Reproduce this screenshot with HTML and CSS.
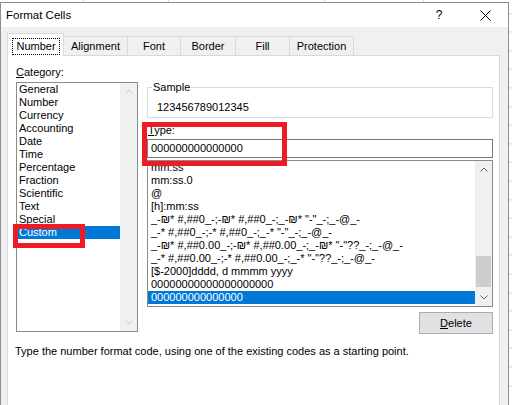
FILE: index.html
```html
<!DOCTYPE html>
<html lang="en">
<head>
<meta charset="utf-8">
<title>Format Cells</title>
<link rel="stylesheet" href="styles.css">
</head>
<body>
<div class="screen">
  <div class="dialog">
    <div class="titlebar">
      <span class="title">Format Cells</span>
      <span class="capbtn help">?</span>
      <span class="capbtn close">
        <svg width="11" height="11" viewBox="0 0 11 11"><path d="M0.5 0.5L10.5 10.5M10.5 0.5L0.5 10.5" stroke="#000" stroke-width="1" fill="none"/></svg>
      </span>
    </div>
    <div class="content">
      <div class="tabs">
        <div class="tab active t-number"><span class="focus">Number</span></div>
        <div class="tab t-align">Alignment</div>
        <div class="tab t-font">Font</div>
        <div class="tab t-border">Border</div>
        <div class="tab t-fill">Fill</div>
        <div class="tab t-prot">Protection</div>
      </div>
      <div class="panel">
        <div class="cols">
          <div class="left">
            <div class="label"><u>C</u>ategory:</div>
            <div class="listbox cat">
              <div class="items">
                <div class="item">General</div>
                <div class="item">Number</div>
                <div class="item">Currency</div>
                <div class="item">Accounting</div>
                <div class="item">Date</div>
                <div class="item">Time</div>
                <div class="item">Percentage</div>
                <div class="item">Fraction</div>
                <div class="item">Scientific</div>
                <div class="item">Text</div>
                <div class="item">Special</div>
                <div class="item sel">Custom</div>
              </div>
              <div class="vscroll disabled">
                <div class="arrow"><svg width="8" height="5" viewBox="0 0 8 5"><polyline points="0.5,4.5 4,1 7.5,4.5" fill="none" stroke-width="1"/></svg></div>
                <div class="track"></div>
                <div class="arrow"><svg width="8" height="5" viewBox="0 0 8 5"><polyline points="0.5,0.5 4,4 7.5,0.5" fill="none" stroke-width="1"/></svg></div>
              </div>
            </div>
          </div>
          <div class="right">
            <fieldset class="sample">
              <legend>Sample</legend>
              <div class="sample-val">123456789012345</div>
            </fieldset>
            <div class="label type-label"><u>T</u>ype:</div>
            <div class="input">000000000000000</div>
            <div class="listbox fmt">
              <div class="items">
                <div class="item">mm:ss</div>
                <div class="item">mm:ss.0</div>
                <div class="item">@</div>
                <div class="item">[h]:mm:ss</div>
                <div class="item">_-₪* #,##0_-;-₪* #,##0_-;_-₪* "-"_-;_-@_-</div>
                <div class="item">_-* #,##0_-;-* #,##0_-;_-* "-"_-;_-@_-</div>
                <div class="item">_-₪* #,##0.00_-;-₪* #,##0.00_-;_-₪* "-"??_-;_-@_-</div>
                <div class="item">_-* #,##0.00_-;-* #,##0.00_-;_-* "-"??_-;_-@_-</div>
                <div class="item">[$-2000]dddd, d mmmm yyyy</div>
                <div class="item">00000000000000000000</div>
                <div class="item sel">000000000000000</div>
              </div>
              <div class="vscroll">
                <div class="arrow"><svg width="8" height="5" viewBox="0 0 8 5"><polyline points="0.5,4.5 4,1 7.5,4.5" fill="none" stroke-width="1"/></svg></div>
                <div class="track"><div class="thumb"></div></div>
                <div class="arrow"><svg width="8" height="5" viewBox="0 0 8 5"><polyline points="0.5,0.5 4,4 7.5,0.5" fill="none" stroke-width="1"/></svg></div>
              </div>
            </div>
            <div class="btn-row"><button class="btn" type="button"><u>D</u>elete</button></div>
          </div>
        </div>
        <p class="desc">Type the number format code, using one of the existing codes as a starting point.</p>
      </div>
    </div>
  </div>
  <div class="mark mark-custom"></div>
  <div class="mark mark-type"></div>
</div>
</body>
</html>
```
FILE: styles.css
```css
html, body {
  margin: 0;
  padding: 0;
  overflow: hidden;
}
body {
  width: 512px;
  height: 405px;
  font-family: "Liberation Sans", Arial, sans-serif;
  font-size: 11px;
  color: #000;
  background-color: #fff;
  background-image:
    linear-gradient(to right, transparent 83px, #d4d4d4 83px, #d4d4d4 84px, transparent 84px, transparent 168px, #d4d4d4 168px, #d4d4d4 169px, transparent 169px, transparent 324px, #d4d4d4 324px, #d4d4d4 325px, transparent 325px, transparent 423px, #d4d4d4 423px, #d4d4d4 424px, transparent 424px),
    repeating-linear-gradient(to bottom, transparent 0, transparent 17.6px, #d4d4d4 17.6px, #d4d4d4 18.6px);
  background-size: 100% 2px, 100% 100%;
  background-repeat: no-repeat, repeat;
  background-position: 0 0, 0 -4.6px;
}
.screen {
  position: relative;
  width: 512px;
  height: 405px;
}
.dialog {
  margin-top: 2px;
  width: 507px;
  height: 430px;
  border: 1px solid #8f8f8f;
  background: #f0f0f0;
}
.titlebar {
  height: 24px;
  background: #fff;
  display: flex;
  align-items: center;
}
.title {
  flex: 1;
  padding-left: 5px;
  font-size: 11.5px;
}
.capbtn {
  width: 46px;
  height: 24px;
  display: flex;
  align-items: center;
  justify-content: center;
}
.help {
  font-size: 12px;
}
.content {
  padding: 6px 7px 0 6px;
}
.tabs {
  display: flex;
  align-items: flex-end;
  height: 22px;
}
.tab {
  box-sizing: border-box;
  height: 19px;
  line-height: 18px;
  text-align: center;
  border: 1px solid #d9d9d9;
  border-bottom: none;
  background: #f0f0f0;
  margin-left: -1px;
}
.tab.active {
  position: relative;
  z-index: 1;
  height: 23px;
  margin-bottom: -1px;
  margin-left: 0;
  background: #fff;
  padding: 4px 3px 0 4px;
}
.focus {
  display: block;
  height: 15px;
  line-height: 15px;
  border: 1px dotted #000;
}
.t-number { width: 57px; }
.t-align { width: 65px; }
.t-font { width: 54px; }
.t-border { width: 56px; }
.t-fill { width: 55px; }
.t-prot { width: 65px; }
.panel {
  width: 491px;
  height: 380px;
  border: 1px solid #d9d9d9;
  background: #fff;
}
.cols {
  display: grid;
  grid-template-columns: 122px 346px;
  column-gap: 9px;
  padding-left: 8px;
  align-items: start;
}
.label {
  line-height: 13px;
}
.left .label {
  margin-top: 10px;
}
.listbox {
  box-sizing: border-box;
  border: 1px solid #8a8a8a;
  display: flex;
  background: #fff;
}
.listbox.cat {
  margin-top: 3px;
  height: 250px;
}
.items {
  flex: 1;
  min-width: 0;
  overflow: hidden;
}
.item {
  height: 13px;
  line-height: 13px;
  white-space: nowrap;
  padding-left: 2px;
}
.fmt .item {
  padding-left: 3px;
}
.item.sel {
  background: #0078d7;
  color: #fff;
}
.vscroll {
  width: 17px;
  background: #f0f0f0;
  display: flex;
  flex-direction: column;
}
.arrow {
  height: 17px;
  display: flex;
  align-items: center;
  justify-content: center;
}
.arrow svg {
  stroke: #606060;
}
.disabled .arrow svg {
  stroke: #c6c6c6;
}
.track {
  flex: 1;
  display: flex;
  flex-direction: column;
}
.thumb {
  margin: 78px 1px 0;
  height: 31px;
  background: #cdcdcd;
}
.right {
  margin-top: 25px;
}
.sample {
  margin: 0;
  min-width: 0;
  border: 1px solid #dcdcdc;
  padding: 7px 4px 3px 4px;
}
.sample legend {
  padding: 0 1px;
  line-height: 13px;
}
.sample-val {
  line-height: 13px;
  padding-left: 5px;
}
.type-label {
  margin-top: 6px;
  padding-left: 1px;
}
.input {
  box-sizing: border-box;
  margin-top: 2px;
  height: 19px;
  line-height: 17px;
  border: 1px solid #7a7a7a;
  padding-left: 3px;
}
.listbox.fmt {
  margin-top: 2px;
  height: 147px;
}
.btn-row {
  display: flex;
  justify-content: flex-end;
  margin-top: 5px;
}
.btn {
  width: 74px;
  height: 22px;
  padding: 0;
  font: inherit;
  color: #000;
  background: #e1e1e1;
  border: 1px solid #adadad;
}
.desc {
  margin: 11px 0 0 7px;
  line-height: 13px;
}
.mark {
  position: absolute;
  box-sizing: border-box;
  border: 5px solid #ed1c24;
}
.mark-custom {
  left: 13px;
  top: 222px;
  width: 72px;
  height: 24px;
}
.mark-type {
  left: 142px;
  top: 120px;
  width: 145px;
  height: 44px;
}
```
